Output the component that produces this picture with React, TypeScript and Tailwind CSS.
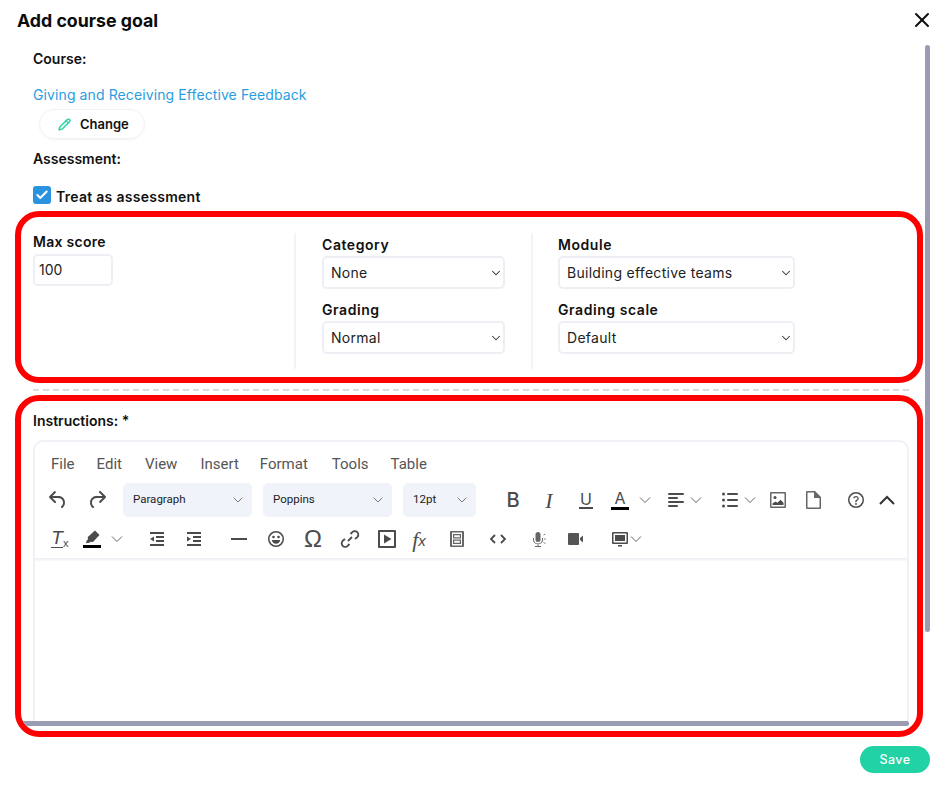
import { Check, ChevronDown, Pencil, X } from "lucide-react";
import type { ReactNode } from "react";

const MENU = [
  { label: "File", cls: "ml-[16px]" },
  { label: "Edit", cls: "ml-[22px]" },
  { label: "View", cls: "ml-[23px]" },
  { label: "Insert", cls: "ml-[23px]" },
  { label: "Format", cls: "ml-[21px]" },
  { label: "Tools", cls: "ml-[24px]" },
  { label: "Table", cls: "ml-[22px]" },
];

function Ico({ className = "", children }: { className?: string; children: ReactNode }) {
  return (
    <svg viewBox="0 0 24 24" fill="#4b4b4b" className={`w-6 h-6 shrink-0 ${className}`}>
      {children}
    </svg>
  );
}

function Glyph({ className = "", children }: { className?: string; children: ReactNode }) {
  return <span className={`relative w-6 h-6 shrink-0 flex items-center justify-center text-[#4b4b4b] ${className}`}>{children}</span>;
}

function Caret({ className = "" }: { className?: string }) {
  return (
    <svg viewBox="0 0 12 12" fill="none" stroke="#666" strokeWidth="1" className={`w-3 h-3 shrink-0 ${className}`}>
      <path d="M1 3.5l5 5 5-5" />
    </svg>
  );
}

function TinySelect({ label, className }: { label: string; className: string }) {
  return (
    <button className={`h-[34px] shrink-0 rounded-[5px] bg-[#f0f3f9] pl-[10px] pr-[6px] flex items-center justify-between text-[#222] text-[11.5px] ${className}`}>
      {label}
      <ChevronDown className="w-[16px] h-[16px] text-[#666]" strokeWidth={1.3} />
    </button>
  );
}

function Field({ label, value, className, gap }: { label: string; value: string; className: string; gap: string }) {
  return (
    <div className={gap}>
      <div className="h-[20px] leading-[20px] text-[14px] font-semibold text-[#111] tracking-[0.04em]">{label}</div>
      <button className={`mt-[1px] h-[33px] rounded-[5px] border-2 border-[#eeeef5] pl-[7px] pr-0 flex items-center justify-between text-[14px] text-[#222] tracking-[0.02em] ${className}`}>
        {value}
        <ChevronDown className="w-[14px] h-[14px] text-[#333]" strokeWidth={1.8} />
      </button>
    </div>
  );
}

export default function App() {
  return (
    <div className="relative w-[947px] h-[790px] overflow-hidden bg-white font-['Inter',sans-serif]">
      {/* Header */}
      <div className="h-[42px] pl-[17px] pr-[16px] flex items-center justify-between">
        <h1 className="text-[17.75px] font-bold text-[#0b0b0b]">Add course goal</h1>
        <X className="w-[24px] h-[24px] text-[#111] -mr-[3px] -mt-[2px]" strokeWidth={2} />
      </div>

      {/* Course block */}
      <div className="pl-[33px]">
        <div className="mt-[7px] h-[20px] leading-[20px] text-[14px] font-semibold text-[#111]">Course:</div>
        <a className="block mt-[16px] h-[20px] leading-[20px] text-[14px] text-[#2a9de0] tracking-[0.0073em]">Giving and Receiving Effective Feedback</a>
        <button className="mt-[4px] ml-[6px] w-[106px] h-[30px] rounded-full border border-[#f1f2f7] shadow-[0_1px_2px_rgba(30,40,80,0.05)] flex items-center pl-[18px] gap-[9px] pt-[1px] text-[13px] font-semibold text-[#111]">
          <Pencil className="w-[13px] h-[13px] text-[#21d3a4]" strokeWidth={2.6} />
          Change
        </button>
        <div className="mt-[10px] h-[20px] leading-[20px] text-[14px] font-semibold text-[#111]">Assessment:</div>
        <div className="mt-[17px] h-[18px] flex items-center gap-[5px]">
          <span className="w-[18px] h-[18px] rounded-[3px] bg-[#2a93e0] flex items-center justify-center">
            <Check className="w-[14px] h-[14px] text-white" strokeWidth={3.5} />
          </span>
          <span className="mt-[2px] text-[14px] font-semibold text-[#111] tracking-[0.02em]">Treat as assessment</span>
        </div>
      </div>

      {/* Assessment settings */}
      <div className="mt-[7px] ml-[15px] w-[908px] h-[172px] border-[6px] border-[#ff0000] rounded-[24px] pt-[16px] flex">
        <div className="w-[275px] shrink-0 h-[136px] pl-[12px] border-r-2 border-[#f2f2f7]">
          <div className="mt-[-1px] h-[20px] leading-[20px] text-[14px] font-semibold text-[#111] tracking-[0.02em]">Max score</div>
          <div className="mt-[2px] w-[80px] h-[32px] rounded-[5px] border-2 border-[#eeeef5] pl-[4px] pb-[2px] flex items-center text-[14px] text-[#222]">100</div>
        </div>
        <div className="w-[237px] shrink-0 h-[136px] pl-[26px] border-r-2 border-[#f2f2f7]">
          <Field label="Category" value="None" className="w-[183px]" gap="mt-[2px]" />
          <Field label="Grading" value="Normal" className="w-[183px]" gap="mt-[11px]" />
        </div>
        <div className="pl-[25px]">
          <Field label="Module" value="Building effective teams" className="w-[237px]" gap="mt-[2px]" />
          <Field label="Grading scale" value="Default" className="w-[237px]" gap="mt-[11px]" />
        </div>
      </div>

      <div className="mt-[6px] ml-[33px] w-[876px] border-t-2 border-dashed border-[#dcdcdc]" />

      {/* Instructions */}
      <div className="relative mt-[4px] ml-[15px] w-[908px] h-[342px] border-[6px] border-[#ff0000] rounded-[24px] overflow-hidden pl-[12px]">
        <div className="mt-[10px] h-[20px] leading-[20px] text-[14px] font-semibold text-[#111]">Instructions: *</div>
        <div className="mt-[9px] w-[876px] h-[281px] rounded-t-[10px] border-2 border-b-0 border-[#f0f0f6] font-['Roboto',sans-serif]">
          <div className="flex items-center h-[41px] pt-[3px] text-[15px] text-[#555]">
            {MENU.map(m => (
              <span key={m.label} className={m.cls}>{m.label}</span>
            ))}
          </div>

          {/* Toolbar row 1 */}
          <div className="flex items-center h-[34px] pl-[11px]">
            <Ico><path d="M6.4 8H12c3.7 0 6.2 2 6.8 5.1.6 2.7-.4 5.6-2.3 6.8a1 1 0 0 1-1-1.8c1.1-.6 1.8-2.7 1.4-4.6-.5-2.1-2.1-3.5-4.9-3.5H6.4l3.3 3.3a1 1 0 1 1-1.4 1.4l-5-5a1 1 0 0 1 0-1.4l5-5a1 1 0 0 1 1.4 1.4L6.4 8Z" /></Ico>
            <Ico className="ml-[15px]"><path d="M17.6 10H12c-2.8 0-4.4 1.4-4.9 3.5-.4 2 .3 4 1.4 4.6a1 1 0 1 1-1 1.8c-2-1.2-2.9-4.1-2.3-6.8.6-3 3-5.1 6.8-5.1h5.6l-3.3-3.3a1 1 0 1 1 1.4-1.4l5 5a1 1 0 0 1 0 1.4l-5 5a1 1 0 0 1-1.4-1.4l3.3-3.3Z" /></Ico>
            <TinySelect label="Paragraph" className="ml-[14px] w-[129px]" />
            <TinySelect label="Poppins" className="ml-[11px] w-[129px]" />
            <TinySelect label="12pt" className="ml-[11px] w-[73px]" />
            <Glyph className="ml-[25px] text-[20px] font-['Inter',sans-serif] font-medium">B</Glyph>
            <Glyph className="ml-[12px] text-[22px] italic font-['Liberation_Serif',serif]">I</Glyph>
            <Glyph className="ml-[13px] text-[16px] font-['Inter',sans-serif]">
              <span className="border-b-2 border-[#4b4b4b] leading-[15px] px-[1px]">U</span>
            </Glyph>
            <Glyph className="ml-[10px] text-[16px] font-['Inter',sans-serif]">
              <span className="leading-[14px] -mt-[5px]">A</span>
              <span className="absolute left-[3px] right-[3px] bottom-[2px] h-[3px] bg-black" />
            </Glyph>
            <Caret className="ml-[7px]" />
            <Ico className="ml-[13px]"><rect x="4" y="5" width="16" height="2" rx="1" /><rect x="4" y="9" width="10" height="2" rx="1" /><rect x="4" y="13" width="16" height="2" rx="1" /><rect x="4" y="17" width="10" height="2" rx="1" /></Ico>
            <Caret className="ml-[2px]" />
            <Ico className="ml-[16px]"><circle cx="5.5" cy="6" r="1.5" /><circle cx="5.5" cy="12" r="1.5" /><circle cx="5.5" cy="18" r="1.5" /><rect x="9" y="5" width="11" height="2" rx="1" /><rect x="9" y="11" width="11" height="2" rx="1" /><rect x="9" y="17" width="11" height="2" rx="1" /></Ico>
            <Caret className="ml-[2px]" />
            <Ico className="ml-[10px]"><path fillRule="evenodd" d="M5 4h14a1 1 0 0 1 1 1v14a1 1 0 0 1-1 1H5a1 1 0 0 1-1-1V5a1 1 0 0 1 1-1Zm.5 1.5v13h13v-13h-13Z" fill="#666" /><circle cx="9" cy="9.500" r="1.500" /><path d="M6.500 17v-1.500l3-2 2 1.200 3-3 3 3V17h-11Z" /></Ico>
            <Ico className="ml-[11px]"><path fillRule="evenodd" d="M6 3h8l6 6v11a1 1 0 0 1-1 1H6a1 1 0 0 1-1-1V4a1 1 0 0 1 1-1Zm.500 1.500v15h12V10H13V4.500H6.500Z" fill="#666" /></Ico>
            <Ico className="ml-[19px]"><path fillRule="evenodd" d="M12 4a8 8 0 1 1 0 16 8 8 0 0 1 0-16Zm0 1.500a6.500 6.500 0 1 0 0 13 6.500 6.500 0 0 0 0-13Z" /><path d="M12 8c-1.500 0-2.600.9-2.800 2.300h1.300c.2-.7.700-1.100 1.500-1.100.9 0 1.400.5 1.400 1.200 0 .6-.3.900-1 1.400-.8.500-1.200 1.100-1.200 2v.4h1.300v-.3c0-.5.200-.8.900-1.300.8-.6 1.300-1.200 1.300-2.200C14.700 9 13.600 8 12 8Z" /><circle cx="12" cy="16" r=".9" /></Ico>
            <svg viewBox="0 0 24 24" fill="none" stroke="#333" strokeWidth="2" className="ml-[7px] w-6 h-6 shrink-0"><path d="M5 16l7-7 7 7" /></svg>
          </div>

          {/* Toolbar row 2 */}
          <div className="flex items-center h-[34px] mt-[5px] pl-[12px]">
            <Glyph className="!justify-start pl-[4px] text-[19px] italic font-['Liberation_Sans',sans-serif]">
              <span className="-mt-[2px] border-b-[1.5px] border-[#4b4b4b] leading-[19px] w-[12px] text-center">T</span>
              <span className="mt-[8px] text-[11px] leading-[12px] not-italic">x</span>
            </Glyph>
            <Ico className="ml-[9px]"><path d="M15 3.500l4.500 4.500-6.500 7-5-.2-.2-4.800 7.200-6.500Z" /><path d="M7 12.500l3.500 3-4.500.8L7 12.500Z" /><rect x="3" y="18" width="18" height="3" fill="#000" /></Ico>
            <Caret className="ml-[7px]" />
            <Ico className="ml-[22px]"><rect x="5" y="5" width="14" height="2" /><rect x="11" y="9" width="8" height="2" /><rect x="11" y="13" width="8" height="2" /><rect x="5" y="17" width="14" height="2" /><path d="M5 12l4-2.500v5L5 12Z" /></Ico>
            <Ico className="ml-[13px]"><rect x="5" y="5" width="14" height="2" /><rect x="11" y="9" width="8" height="2" /><rect x="11" y="13" width="8" height="2" /><rect x="5" y="17" width="14" height="2" /><path d="M9 12l-4-2.500v5L9 12Z" /></Ico>
            <Ico className="ml-[21px]"><rect x="4" y="11" width="16" height="2" /></Ico>
            <Ico className="ml-[13px]"><path fillRule="evenodd" d="M12 4a8 8 0 1 1 0 16 8 8 0 0 1 0-16Zm0 1.500a6.500 6.500 0 1 0 0 13 6.500 6.500 0 0 0 0-13Z" /><circle cx="9.500" cy="10" r="1.300" /><circle cx="14.500" cy="10" r="1.300" /><path d="M7.800 13h8.400c-.3 2.300-2 3.800-4.200 3.800S8.100 15.300 7.800 13Z" /></Ico>
            <Glyph className="ml-[13px] text-[24px] font-['Liberation_Sans',sans-serif]">Ω</Glyph>
            <svg viewBox="0 0 24 24" fill="none" stroke="#4b4b4b" strokeWidth="1.800" className="ml-[13px] w-6 h-6 shrink-0"><path d="M10 14l4-4" /><path d="M12.500 7l1.800-1.800a3.500 3.500 0 0 1 5 5L17 12" /><path d="M11.500 17l-1.800 1.800a3.500 3.500 0 0 1-5-5L7 12" /></svg>
            <Ico className="ml-[13px]"><path fillRule="evenodd" d="M4 3h16a1 1 0 0 1 1 1v16a1 1 0 0 1-1 1H4a1 1 0 0 1-1-1V4a1 1 0 0 1 1-1Zm1 2v14h14V5H5Z" /><path d="M9 7.500l7.500 4.500L9 16.500v-9Z" /></Ico>
            <Glyph className="ml-[8px] text-[22px] italic font-['Liberation_Serif',serif]">
              f<span className="text-[15px] font-['Liberation_Sans',sans-serif] mt-[4px]">x</span>
            </Glyph>
            <Ico className="ml-[14px]"><path fillRule="evenodd" d="M6 4h12a1 1 0 0 1 1 1v14a1 1 0 0 1-1 1H6a1 1 0 0 1-1-1V5a1 1 0 0 1 1-1Zm1 1.500v13h10v-13H7Z" fill="#666" /><path fillRule="evenodd" d="M8 7h8v4.500H8V7Zm1.200 1.200v2h5.600v-2H9.200ZM8 12.500h8V17H8v-4.500Zm1.200 1.200v2h5.600v-2H9.200Z" fill="#666" /></Ico>
            <svg viewBox="0 0 24 24" fill="none" stroke="#4b4b4b" strokeWidth="1.800" className="ml-[17px] w-6 h-6 shrink-0"><path d="M9 8l-4 4 4 4M15 8l4 4-4 4" /></svg>
            <Ico className="ml-[16px]"><rect x="9.500" y="5" width="5" height="10" rx="2.500" fill="#666" /><path d="M7 11v1.500a5 5 0 0 0 10 0V11h-1v1.500a4 4 0 0 1-8 0V11H7ZM11.500 17h1v2H15v1H9v-1h2.500v-2Z" fill="#666" /><path d="M17.500 8l2-1M18 12h2M17.500 15.500l2 1" stroke="#888" strokeWidth="1" /></Ico>
            <Ico className="ml-[13px]"><rect x="5" y="6" width="11" height="12" rx="1" fill="#555" /><path d="M17 11l3-2.500v7L17 13v-2Z" fill="#555" /></Ico>
            <Ico className="ml-[21px]"><path fillRule="evenodd" d="M5 5h14a1 1 0 0 1 1 1v10a1 1 0 0 1-1 1H5a1 1 0 0 1-1-1V6a1 1 0 0 1 1-1Zm.500 1.500v9h13v-9h-13Z" /><rect x="7" y="8" width="10" height="6" /><path d="M10 18h4v1.500h-4z" /></Ico>
            <Caret className="-ml-[2px]" />
          </div>

          <div className="mt-[2px] h-[3px] bg-gradient-to-b from-[#eceef3] to-[#f9fafb]" />
        </div>

        {/* Editor horizontal scrollbar */}
        <div className="absolute left-0 right-[8px] bottom-[5px] h-[5px] rounded-r-[2px] bg-[#9a9db2]" />
      </div>

      {/* Footer */}
      <div className="flex justify-end pr-[17px] mt-[9px]">
        <button className="w-[70px] h-[27px] pt-[1px] rounded-full bg-[#21d3a4] text-white text-[12.5px] font-medium tracking-[0.03em]">Save</button>
      </div>

      {/* Modal vertical scrollbar */}
      <div className="absolute left-[925px] top-[45px] w-[5px] h-[587px] rounded-full bg-[#9a9db2]" />
    </div>
  );
}
